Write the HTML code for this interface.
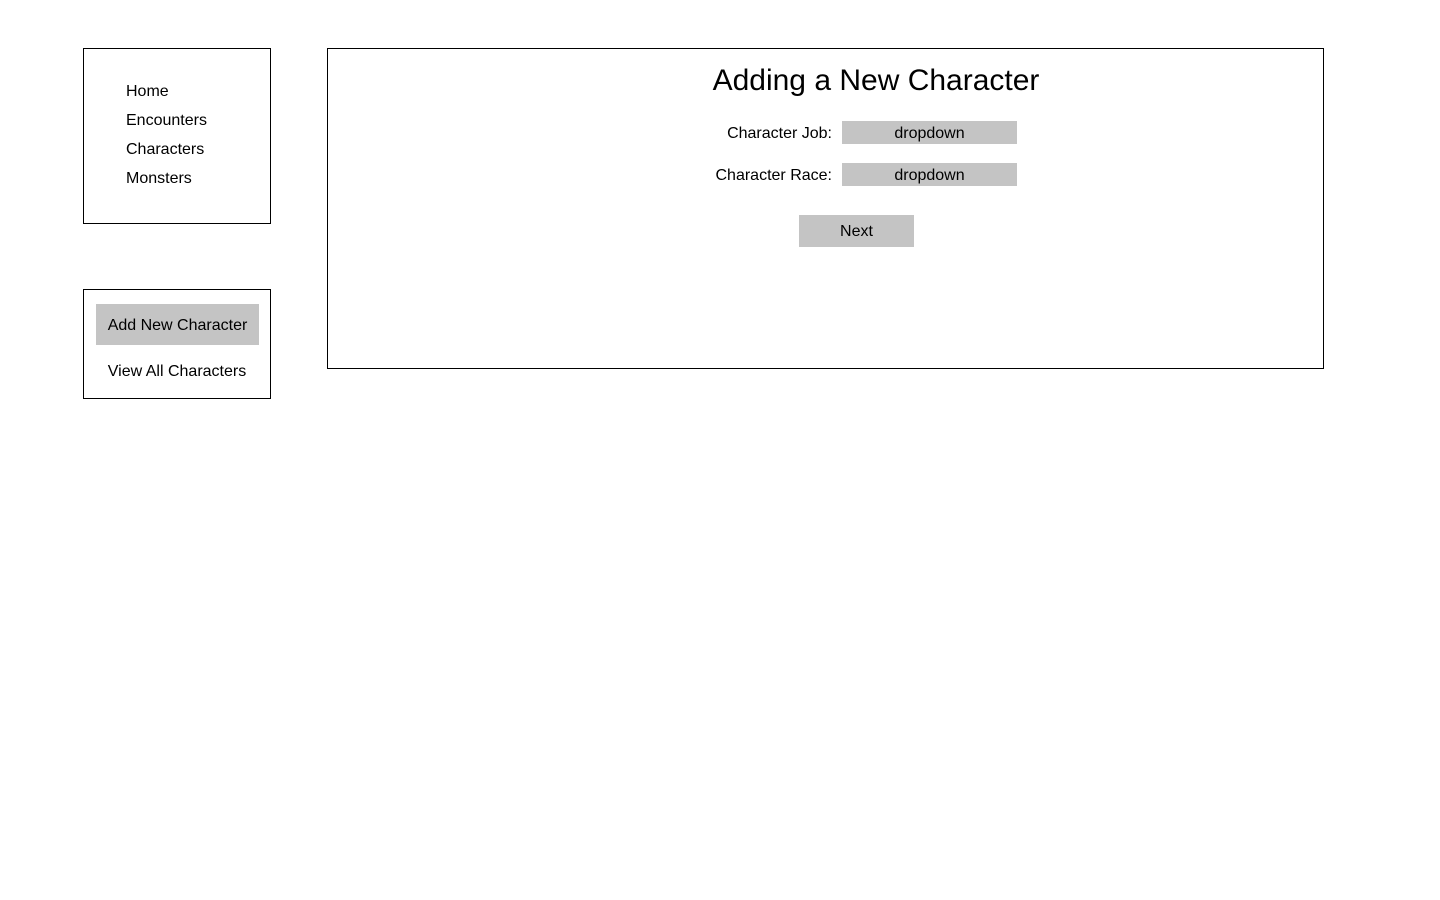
<!DOCTYPE html>
<html><head><style>
body{margin:0;width:1440px;height:900px;background:#fff;font-family:"Liberation Sans",sans-serif;color:#000;position:relative}
.b{position:absolute;border:1px solid #000;box-sizing:border-box}
.t{position:absolute;font-size:16px;line-height:20px;white-space:nowrap}
.g{position:absolute;background:#c4c4c4;font-size:16px;text-align:center}
</style></head><body>
<div class="b" style="left:83px;top:48px;width:188px;height:176px"></div>
<div class="t" style="left:126px;top:82px">Home</div>
<div class="t" style="left:126px;top:111px">Encounters</div>
<div class="t" style="left:126px;top:140px">Characters</div>
<div class="t" style="left:126px;top:169px">Monsters</div>
<div class="b" style="left:83px;top:289px;width:188px;height:110px"></div>
<div class="g" style="left:96px;top:304px;width:163px;height:41px;line-height:43px">Add New Character</div>
<div class="t" style="left:83px;width:188px;text-align:center;top:362px">View All Characters</div>
<div class="b" style="left:327px;top:48px;width:997px;height:321px"></div>
<div class="t" style="left:327px;width:1098px;text-align:center;top:63px;font-size:30px;line-height:36px">Adding a New Character</div>
<div class="t" style="left:600px;width:232px;text-align:right;top:124px">Character Job:</div>
<div class="g" style="left:842px;top:121px;width:175px;height:23px;line-height:25px">dropdown</div>
<div class="t" style="left:600px;width:232px;text-align:right;top:166px">Character Race:</div>
<div class="g" style="left:842px;top:163px;width:175px;height:23px;line-height:25px">dropdown</div>
<div class="g" style="left:799px;top:215px;width:115px;height:32px;line-height:34px">Next</div>
</body></html>
